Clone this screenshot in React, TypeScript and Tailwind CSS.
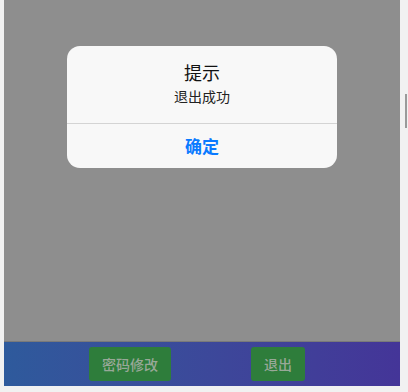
export default function App() {
  return (
    <div className="flex h-[392px] w-[408px] bg-[#f1f1f1] font-['Noto_Sans_CJK_SC',sans-serif]">
      <div className="ml-[4px] flex w-[396px] flex-col">
        {/* page under the mask */}
        <div className="relative flex-1 bg-[#8e8e8e]">
          <div className="absolute left-[63px] top-[46px] w-[270px] rounded-[13px] bg-[#f8f8f8]">
            <div className="flex h-[77px] flex-col items-center pt-[13px]">
              <div className="text-[18px] leading-[26px] text-[#111]">提示</div>
              <div className="mt-[1px] text-[14px] leading-[20px] text-[#222]">退出成功</div>
            </div>
            <div className="h-px bg-[#d4d4d4]" />
            <div className="flex h-[44px] items-center justify-center text-[17px] font-bold text-[#0a7aff]">
              确定
            </div>
          </div>
        </div>
        <div className="h-px bg-[#7a7a7a]" />
        <div className="flex h-[44px] items-center bg-gradient-to-r from-[#2e5a9c] to-[#443598]">
          <button className="ml-[85px] h-[34px] w-[82px] rounded-[3px] bg-[#2e7d3b] text-[14px] font-medium text-[#98a898]">
            密码修改
          </button>
          <button className="ml-[80px] h-[34px] w-[54px] rounded-[3px] bg-[#2e7d3b] text-[14px] font-medium text-[#98a898]">
            退出
          </button>
        </div>
        <div className="h-[6px]" />
      </div>
      <div className="relative flex-1">
        <div className="absolute right-[1px] top-[94px] h-[34px] w-[2px] bg-[#9a9a9a]" />
      </div>
    </div>
  )
}
